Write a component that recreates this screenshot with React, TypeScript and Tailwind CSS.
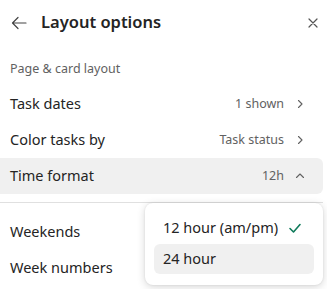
import React from "react";

const font = { fontFamily: '"Segoe UI", "Noto Sans", Lato, sans-serif' };

const Chevron = ({ up = false }: { up?: boolean }) => (
  <svg width="12" height="12" viewBox="0 0 12 12" fill="none" stroke="#616161" strokeWidth="1.1" strokeLinecap="round" strokeLinejoin="round">
    {up ? <path d="M2.5 7.5 6 4l3.5 3.5" /> : <path d="M4.5 2.5 8 6l-3.5 3.5" />}
  </svg>
);

const Row = ({ label, value, up, active }: { label: string; value?: string; up?: boolean; active?: boolean }) => (
  <div className={`flex h-9 items-center justify-between pl-[10px] pr-[17px] rounded-r-md ${active ? "bg-[#f0f0f0]" : ""}`}>
    <span className="text-[14.5px] text-[#242424]">{label}</span>
    {value && (
      <span className="flex items-center gap-[10px]">
        <span className="text-[12.5px] text-[#616161]">{value}</span>
        <Chevron up={up} />
      </span>
    )}
  </div>
);

export default function App() {
  return (
    <div className="relative w-[327px] h-[289px] bg-white overflow-hidden" style={font}>
      <div className="w-[323px]">
        {/* Header */}
        <div className="flex h-[45px] items-center pl-[10px] pr-[3px]">
          <svg width="18" height="18" viewBox="0 0 18 18" fill="none" stroke="#444" strokeWidth="1.2" strokeLinecap="round" strokeLinejoin="round">
            <path d="M16 9H2.5M8 3.5 2.5 9 8 14.5" />
          </svg>
          <span className="ml-[13px] text-[16.5px] font-semibold text-[#242424]">Layout options</span>
          <svg className="ml-auto" width="14" height="14" viewBox="0 0 14 14" stroke="#555" strokeWidth="1.2" strokeLinecap="round">
            <path d="M3 3l8 8M11 3l-8 8" />
          </svg>
        </div>

        <div className="flex h-[41px] items-center pl-[10px] pt-[7px] text-[12.5px] text-[#616161]">Page &amp; card layout</div>

        <Row label="Task dates" value="1 shown" />
        <Row label="Color tasks by" value="Task status" />
        <Row label="Time format" value="12h" up active />

        <div className="mt-[8px] h-px bg-[#e0e0e0]" />

        <div className="pt-[11px]">
          <Row label="Weekends" />
          <Row label="Week numbers" />
        </div>
      </div>

      {/* Time format menu */}
      <div className="absolute left-[145px] top-[203px] w-[178px] rounded-lg bg-white px-[9px] pt-[10px] pb-[11px] shadow-[0_2px_8px_rgba(0,0,0,0.16),0_0_2px_rgba(0,0,0,0.10)]">
        <div className="flex h-[30px] items-center justify-between pl-[9px] pr-[12px]">
          <span className="text-[14.5px] text-[#242424]">12 hour (am/pm)</span>
          <svg width="14" height="14" viewBox="0 0 14 14" fill="none" stroke="#0e7a5a" strokeWidth="1.6" strokeLinecap="round" strokeLinejoin="round">
            <path d="M2 7.5 5.5 11 12 3.5" />
          </svg>
        </div>
        <div className="mt-px flex h-[30px] items-center rounded-md bg-[#f0f0f0] pl-[9px]">
          <span className="text-[14.5px] text-[#242424]">24 hour</span>
        </div>
      </div>
    </div>
  );
}
